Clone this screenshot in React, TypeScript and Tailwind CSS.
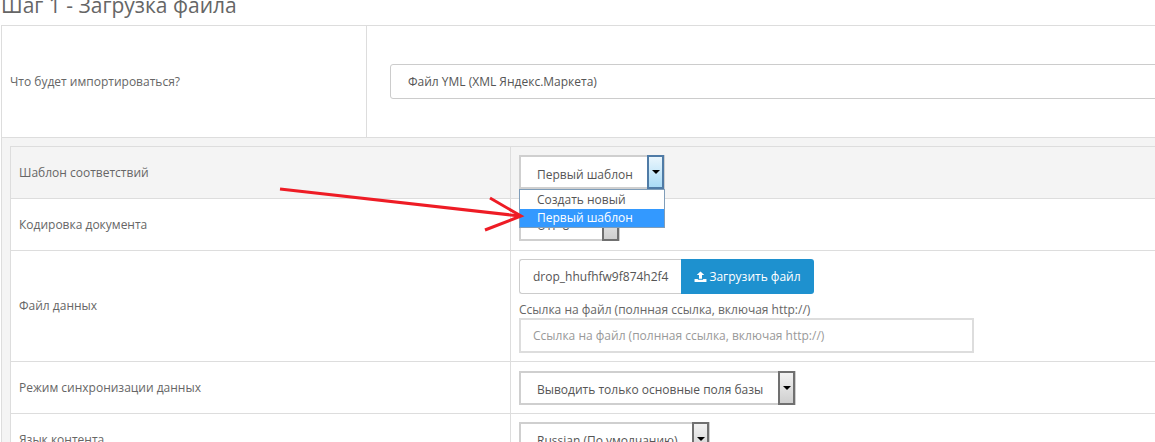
const font = "font-['Open_Sans',sans-serif]";

function SelectBox({ label, width, open }: { label: string; width: string; open?: boolean }) {
  return (
    <div className={`flex h-[34px] ${width} border-2 border-[#cfcfcf] bg-white`}>
      <div className={`flex-1 pl-[16px] text-[12px] ${open ? "leading-[35px]" : "leading-[33px]"} text-[#555] whitespace-nowrap overflow-hidden`}>{label}</div>
      <div
        className={`relative -my-[2px] -mr-[1px] flex w-[17px] shrink-0 items-center justify-center border-2 ${
          open
            ? "border-[#4f7ba6] bg-gradient-to-b from-[#eaf6fd] to-[#a9dbf6]"
            : "border-[#707070] bg-gradient-to-b from-[#f2f2f2] to-[#cfcfcf]"
        }`}
      >
        <div className="h-0 w-0 border-x-[4px] border-t-[4px] border-x-transparent border-t-black" />
      </div>
    </div>
  );
}

function Row({ label, h, grey, children }: { label: string; h: string; grey?: boolean; children: React.ReactNode }) {
  return (
    <div className={`flex ${h} border-t border-[#ddd] ${grey ? "bg-[#f4f4f4]" : "bg-white"}`}>
      <div className="flex w-[500px] shrink-0 items-center border-r border-[#ddd] pl-[8px] text-[12px] text-[#666]">{label}</div>
      <div className="flex-1 pl-[8px]">{children}</div>
    </div>
  );
}

export default function App() {
  return (
    <div className={`relative h-[442px] w-[1155px] overflow-hidden bg-white ${font}`}>
      <h1 className="-mt-[8px] mb-[1px] h-[32px] pl-[1px] text-[21px] leading-[26px] text-[#666]">Шаг 1 - Загрузка файла</h1>

      <div className="ml-[1px] w-[1200px] border-l border-t border-[#ddd]">
        {/* first block */}
        <div className="flex h-[111px]">
          <div className="flex w-[365px] shrink-0 items-center border-r border-[#ddd] pl-[8px] text-[12px] text-[#666]">
            Что будет импортироваться?
          </div>
          <div className="flex flex-1 items-center pl-[23px]">
            <div className="h-[35px] w-[800px] rounded-[3px] border border-[#ccc] pl-[17px] text-[12px] leading-[33px] text-[#555]">
              Файл YML (XML Яндекс.Маркета)
            </div>
          </div>
        </div>

        {/* nested table */}
        <div className="border-t border-[#ddd] bg-[#f4f4f4] pl-[8px] pt-[8px]">
          <div className="border-l border-[#ddd] bg-white">
            <Row label="Шаблон соответствий" h="h-[52px]" grey>
              <div className="pt-[8px]">
                <SelectBox label="Первый шаблон" width="w-[146px]" open />
              </div>
            </Row>
            <Row label="Кодировка документа" h="h-[52px]">
              <div className="pt-[8px]">
                <SelectBox label="UTF-8" width="w-[101px]" />
              </div>
            </Row>
            <Row label="Файл данных" h="h-[111px]">
              <div className="pt-[8px]">
                <div className="flex h-[35px] w-[295px]">
                  <div className="w-[162px] rounded-l-[3px] border border-r-0 border-[#ccc] pl-[13px] text-[12px] leading-[33px] text-[#555] whitespace-nowrap overflow-hidden">
                    drop_hhufhfw9f874h2f4
                  </div>
                  <div className="flex flex-1 items-center justify-center gap-[2px] rounded-r-[3px] bg-[#1e91cf] text-[12px] text-white">
                    <svg width="13" height="12" viewBox="0 0 12 12" fill="white" preserveAspectRatio="none">
                      <path d="M6 0.5 L9.5 4 H7.4 V7.8 H4.6 V4 H2.5 Z" />
                      <path d="M0.5 8 H3.6 V8.8 H8.4 V8 H11.5 V11 H0.5 Z" />
                    </svg>
                    Загрузить файл
                  </div>
                </div>
                <div className="mt-[7px] text-[12px] leading-[17px] text-[#666]">Ссылка на файл (полнная ссылка, включая http://)</div>
                <div className="h-[35px] w-[455px] border-2 border-[#ddd] pl-[12px] text-[12px] leading-[31px] text-[#999]">
                  Ссылка на файл (полнная ссылка, включая http://)
                </div>
              </div>
            </Row>
            <Row label="Режим синхронизации данных" h="h-[52px]">
              <div className="pt-[9px]">
                <SelectBox label="Выводить только основные поля базы" width="w-[277px]" />
              </div>
            </Row>
            <Row label="Язык контента" h="h-[52px]">
              <div className="pt-[8px]">
                <SelectBox label="Russian (По умолчанию)" width="w-[191px]" />
              </div>
            </Row>
          </div>
        </div>
      </div>

      {/* open dropdown list */}
      <div className="absolute left-[519px] top-[189px] h-[39px] w-[146px] border border-[#7f9db9] bg-white pt-[1px] text-[12px] leading-[18px] text-[#555]">
        <div className="pl-[17px]">Создать новый</div>
        <div className="bg-[#3399ff] pl-[17px] text-white">Первый шаблон</div>
      </div>

      {/* hand drawn arrow */}
      <svg className="absolute left-0 top-0" width="1155" height="442" fill="none" stroke="#ee1c25" strokeWidth="3">
        <path d="M280 189 L520 216" />
        <path d="M490 198 L521 216 L485 230" />
      </svg>
    </div>
  );
}
